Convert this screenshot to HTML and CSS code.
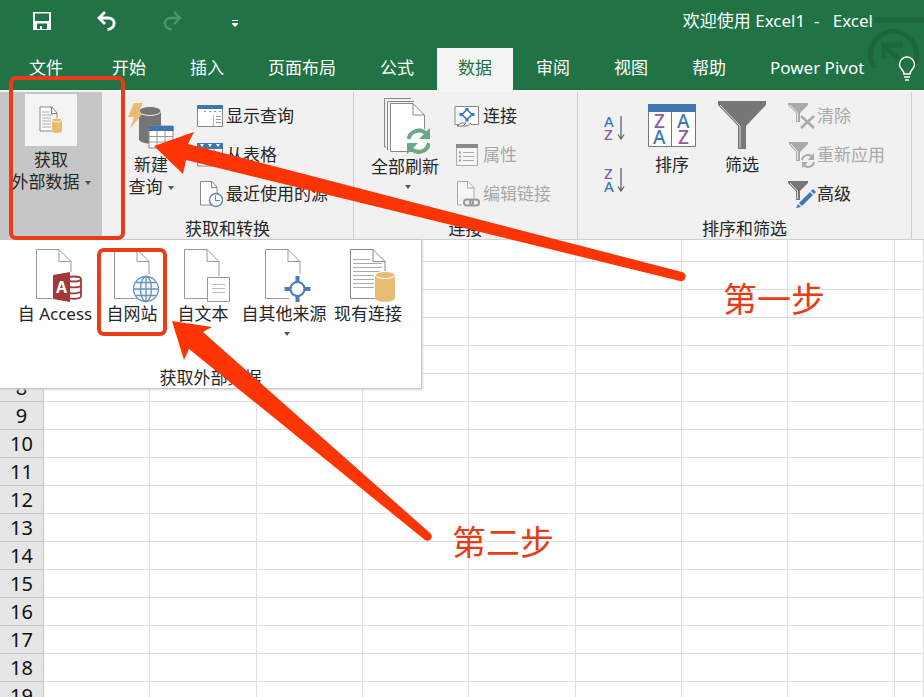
FILE: index.html
```html
<!DOCTYPE html>
<html lang="zh-CN">
<head>
<meta charset="utf-8">
<meta name="viewport" content="width=device-width, initial-scale=1">
<title>欢迎使用 Excel1 - Excel</title>
<link rel="stylesheet" href="styles.css">
</head>
<body>
<header class="header">
  <svg class="header-art" width="60" height="90" viewBox="0 0 60 90" fill="none" stroke="#1c663d" aria-hidden="true">
    <path d="M10 20H60" stroke-width="5"/>
    <path d="M11 68A23 23 0 1 1 48 68" stroke-width="5"/>
    <path d="M20 59V45H39M22 47L39 64" stroke-width="5"/>
  </svg>
  <div class="titlebar">
    <div class="quick">
      <button class="quick-btn" aria-label="保存"><svg width="20" height="20" viewBox="0 0 20 20"><path fill="#fff" fill-rule="evenodd" d="M1 1H19V19H1ZM3 2.500V10H17V2.500ZM5 12.500V18H8V15H10V18H15V12.500Z"/></svg></button>
      <button class="quick-btn" aria-label="撤消"><svg width="20" height="20" viewBox="0 0 20 20" fill="none" stroke="#fff" stroke-width="2.800"><path d="M8 1L2 7L8 13M2.500 7H11C19 7 19.500 17 10.500 18.500"/></svg></button>
      <button class="quick-btn" aria-label="恢复"><svg width="20" height="20" viewBox="0 0 20 20" fill="none" stroke="#4f9470" stroke-width="2.400"><path d="M12 1L18 7L12 13M17.500 7H9C1 7 .5 17 9.500 18.500"/></svg></button>
      <button class="quick-btn" aria-label="自定义快速访问工具栏"><svg width="16" height="20" viewBox="0 0 16 20" fill="#fff"><path d="M5 9H11V10H5ZM5 12H11V13L8 16L5 13Z"/></svg></button>
    </div>
    <h1 class="title">欢迎使用 Excel1 &nbsp;-&nbsp;&nbsp; Excel</h1>
  </div>
  <nav class="tabs">
    <button class="tab tab-file">文件</button>
    <button class="tab">开始</button>
    <button class="tab">插入</button>
    <button class="tab">页面布局</button>
    <button class="tab">公式</button>
    <button class="tab tab-active">数据</button>
    <button class="tab">审阅</button>
    <button class="tab">视图</button>
    <button class="tab">帮助</button>
    <button class="tab">Power Pivot</button>
    <button class="tell-me" aria-label="操作说明搜索"><svg width="18" height="26" viewBox="0 0 18 26" fill="none" stroke="#fff" stroke-width="1.600"><path d="M6 18C6 14 1.500 13 1.500 8.500A7.500 7.500 0 0 1 16.500 8.500C16.500 13 12 14 12 18ZM6 21H12M7 24H11"/></svg></button>
  </nav>
</header>

<section class="ribbon">
  <button class="external">
    <span class="external-icon"><svg width="24" height="28" viewBox="0 0 24 28"><path d="M1 1H13L18 7V25H1Z" fill="#fff" stroke="#888"/><path d="M12.500 1V7.500H18" fill="none" stroke="#777"/><path d="M3 6H10M3 9H14M3 12H12M3 15H12M3 18H12M3 21H12" stroke="#aaa"/><path d="M13 14V25C13 27.500 23 27.500 23 25V14Z" fill="#e8bd73"/><ellipse cx="18" cy="14" rx="5" ry="2" fill="#e8bd73" stroke="#fff" stroke-width=".8"/></svg></span>
    <span>获取</span>
    <span>外部数据<i class="caret"></i></span>
  </button>

  <div class="group group-query">
    <div class="group-body">
      <button class="big">
        <svg width="46" height="56" viewBox="0 0 46 56"><path d="M11 13V41C11 47 33 47 33 41V13Z" fill="#757575"/><ellipse cx="22" cy="13" rx="11" ry="4.500" fill="#757575" stroke="#eee"/><path d="M6 5H15L10 15H15L2 31L6 19H0Z" fill="#e8bd73"/><path d="M21 28H45V50H21Z" fill="#fff" stroke="#888"/><path d="M20.500 28H45.500V33H20.500Z" fill="#3f78b0"/><path d="M29 33V50M37 33V50M21 38.500H45M21 44H45" stroke="#999"/></svg>
        <span>新建</span>
        <span>查询<i class="caret"></i></span>
      </button>
      <div class="list">
        <button class="small"><svg width="26" height="24" viewBox="0 0 26 24"><path d="M.5 2H25.500V22.500H.5Z" fill="#fff" stroke="#888"/><path d="M0 1H26V5H0Z" fill="#3f78b0"/><path d="M7 7.500H24" stroke="#999" stroke-dasharray="2 3"/><path d="M16.500 11V22" stroke="#bbb"/><path d="M19 12.500H24M19 15.500H24M19 18.500H24" stroke="#999"/></svg>显示查询</button>
        <button class="small"><svg width="26" height="24" viewBox="0 0 26 24"><path d="M.5 1H25.500V23H.5Z" fill="#fff" stroke="#888"/><path d="M0 0H26V6H0Z" fill="#3f78b0"/><path d="M3 1H7L5 4ZM11 1H15L13 4ZM19 1H23L21 4Z" fill="#fff"/><path d="M9 6V22M17 6V22M1 11.500H25M1 17H25" stroke="#aaa"/></svg>从表格</button>
        <button class="small"><svg width="26" height="28" viewBox="0 0 26 28"><path d="M3.500 1.500H15L20 7V25H3.500Z" fill="#fff" stroke="#888"/><path d="M14.500 1.500V7.500H20" fill="none" stroke="#888"/><circle cx="19" cy="20" r="6.500" fill="#fff" stroke="#5c88b0" stroke-width="1.400"/><path d="M18.500 15.500V20.500H23" fill="none" stroke="#5c88b0"/></svg>最近使用的源</button>
      </div>
    </div>
    <h2 class="group-name">获取和转换</h2>
  </div>

  <div class="group group-link">
    <div class="group-body">
      <button class="big">
        <svg width="50" height="58" viewBox="0 0 50 58"><path d="M6 49H4.500V.5H31M8 52H7.500V3.500H34" fill="none" stroke="#888"/><path d="M10.500 5.500H33L44.500 17V53.500H10.500Z" fill="#fff" stroke="#888"/><path d="M33 5.500V17H44" fill="none" stroke="#888"/><circle cx="40" cy="43" r="13" fill="#f1f1f1"/><path d="M27 31H44V53H27Z" fill="#fff"/><g fill="none" stroke="#6aa787" stroke-width="4"><path d="M28.500 41A10.500 10.500 0 0 1 46 35.500"/><path d="M49 45A10.500 10.500 0 0 1 31 50.500"/></g><path d="M50 30V41H39ZM27 56V45H38Z" fill="#6aa787"/></svg>
        <span>全部刷新</span>
        <i class="caret"></i>
      </button>
      <div class="list">
        <button class="small"><svg width="26" height="24" viewBox="0 0 26 24"><path d="M1 2.500H24.500V20.500H17M5 20.500H1V2.500" fill="#fff" stroke="#888"/><path d="M3 22L7 19H12L9 22ZM9 22H13L17 19" fill="none" stroke="#777"/><path d="M13 5.500L18 10.500L13 15.500L8 10.500Z" fill="#fff" stroke="#3f78b0" stroke-width="1.600"/><path d="M11.500 4H14.500V7H11.500ZM11.500 14.500H14.500V17.500H11.500ZM5.500 9H9V12H5.500ZM17 9H20.500V12H17Z" fill="#3f78b0"/></svg>连接</button>
        <button class="small" disabled><svg width="26" height="24" viewBox="0 0 26 24"><path d="M2.500 1.500H23.500V22.500H2.500Z" fill="#f7f5f7" stroke="#aaa"/><path d="M2 1H24V5H2Z" fill="#8d878d"/><path d="M9 9.500H20M9 13.500H20M9 17.500H20" stroke="#aaa"/><path d="M5 9.500H7M5 13.500H7M5 17.500H7" stroke="#999" stroke-width="2"/></svg>属性</button>
        <button class="small" disabled><svg width="26" height="28" viewBox="0 0 26 28"><path d="M3.500 1.500H14L20 7.500V25H3.500Z" fill="#f7f5f7" stroke="#aaa"/><path d="M13.500 1.500V8H20" fill="none" stroke="#aaa"/><path d="M8 18H27V27H8Z" fill="#f1f1f1"/><rect x="10" y="19.500" width="9" height="6" rx="3" fill="none" stroke="#999" stroke-width="2"/><rect x="16" y="19.500" width="9" height="6" rx="3" fill="none" stroke="#999" stroke-width="2"/></svg>编辑链接</button>
      </div>
    </div>
    <h2 class="group-name">连接</h2>
  </div>

  <div class="group group-sort">
    <div class="group-body">
      <div class="orders">
        <button class="order" aria-label="升序"><svg width="22" height="30" viewBox="0 0 22 30"><text class="letter letter-a" x="0" y="14">A</text><text class="letter letter-z" x="0" y="27">Z</text><path d="M17 3V26M14 21.500L17 26L20 21.500" fill="none" stroke="#666" stroke-width="1.300"/></svg></button>
        <button class="order" aria-label="降序"><svg width="22" height="30" viewBox="0 0 22 30"><text class="letter letter-z" x="0" y="14">Z</text><text class="letter letter-a" x="0" y="27">A</text><path d="M17 3V26M14 21.500L17 26L20 21.500" fill="none" stroke="#666" stroke-width="1.300"/></svg></button>
      </div>
      <button class="big">
        <svg width="48" height="56" viewBox="0 0 48 56"><path d="M.5 7H47.500V48.500H.5Z" fill="#fff" stroke="#777"/><path d="M0 6H48V14H0Z" fill="#3f78b0"/><path d="M23.500 14V48" stroke="#777"/><text class="letter letter-big letter-z" x="6" y="30">Z</text><text class="letter letter-big letter-a" x="5" y="46">A</text><text class="letter letter-big letter-a" x="29" y="30">A</text><text class="letter letter-big letter-z" x="30" y="46">Z</text></svg>
        <span>排序</span>
      </button>
      <button class="big">
        <svg width="48" height="56" viewBox="0 0 48 56"><path d="M0 3H48V7L28 28V51H20V28L0 7Z" fill="#777"/><path d="M2 7L22 28V50" fill="none" stroke="#ddd"/></svg>
        <span>筛选</span>
      </button>
      <div class="list">
        <button class="small" disabled><svg width="28" height="28" viewBox="0 0 28 28"><path d="M0 1H20V3L12 11V20H8V11L0 3Z" fill="#aaa"/><path d="M2 3L9.500 11V19" fill="none" stroke="#eee"/><path d="M13 14L26 26M26 14L13 26" stroke="#aaa" stroke-width="2.600"/></svg>清除</button>
        <button class="small" disabled><svg width="28" height="28" viewBox="0 0 28 28"><path d="M1 1H20V3L12 11V20H8V11L1 3Z" fill="#aaa"/><path d="M3 3L9.500 11V19" fill="none" stroke="#eee"/><circle cx="20" cy="20" r="7.500" fill="#f1f1f1"/><path d="M14 19A6 6 0 0 1 25 17M26 21A6 6 0 0 1 15 23" fill="none" stroke="#aaa" stroke-width="2"/><path d="M26 12V19H20ZM14 27V21H20Z" fill="#aaa"/></svg>重新应用</button>
        <button class="small"><svg width="28" height="28" viewBox="0 0 28 28"><path d="M0 1H20V3L12 11V20H8V11L0 3Z" fill="#777"/><path d="M2 3L9.500 11V19" fill="none" stroke="#ddd"/><path d="M11 23L22 12L25 15L14 26Z" fill="#3f78b0"/><path d="M10 24L13 27L8 28ZM23 11L25 9L28 12L26 14Z" fill="#3f78b0"/></svg>高级</button>
      </div>
    </div>
    <h2 class="group-name">排序和筛选</h2>
  </div>

  <div class="dropdown">
    <div class="sources">
      <button class="source">
        <svg width="54" height="55" viewBox="0 0 54 55"><path d="M43 24V13.500L31 1.500H8.500V50.500H24M31 1.500V13.500H43" fill="none" stroke="#999"/><path d="M40 30C42 27 53 27 54 30V49C53 52 42 52 40 49Z" fill="#fff"/><g fill="none" stroke="#a4373a" stroke-width="1.800"><ellipse cx="46" cy="31" rx="7" ry="2.500"/><path d="M53 31V48C53 51.500 41 51.500 40 49M53 37C53 40 41 40 40 38M53 42.500C53 46 41 46 40 44"/></g><path d="M25 27L42 24V54L25 51Z" fill="#a4373a"/><text class="access-letter" x="28" y="45">A</text></svg>
        <span>自 Access</span>
      </button>
      <button class="source">
        <svg width="54" height="55" viewBox="0 0 54 55"><path d="M44 26V13.500L32 1.500H9.500V50.500H33M32 1.500V13.500H44" fill="none" stroke="#999"/><g transform="translate(2 0)" fill="none" stroke="#6a93b8" stroke-width="1.300"><circle cx="39" cy="41" r="12.500" fill="#f0f7fc"/><ellipse cx="39" cy="41" rx="5.500" ry="12.500"/><path d="M39 28.500V53.500M26.500 41H51.500M29 34.500H49M29 47.500H49"/></g></svg>
        <span>自网站</span>
      </button>
      <button class="source">
        <svg width="54" height="55" viewBox="0 0 54 55"><path d="M43 28V13.500L31 1.500H8.500V50.500H31M31 1.500V13.500H43" fill="none" stroke="#999"/><path d="M31.500 29.500H53.500V53.500H31.500Z" fill="#fff" stroke="#999"/><path d="M36 36.500H49M36 40.500H49M36 44.500H49" stroke="#bbb"/></svg>
        <span>自文本</span>
      </button>
      <button class="source">
        <svg width="54" height="55" viewBox="0 0 54 55"><path d="M43 26V13.500L31 1.500H8.500V50.500H32M31 1.500V13.500H43" fill="none" stroke="#999"/><path d="M40.500 28V54M27.500 41H53.500" stroke="#4a7db8" stroke-width="4"/><circle cx="40.500" cy="41" r="7" fill="#fff" stroke="#4a7db8" stroke-width="2"/></svg>
        <span>自其他来源</span>
        <i class="caret"></i>
      </button>
      <button class="source">
        <svg width="54" height="55" viewBox="0 0 54 55"><path d="M44 24V13.500L32 1.500H9.500V50.500H34M32 1.500V13.500H44" fill="none" stroke="#888"/><path d="M12 11.500H29M12 15.500H41M12 19.500H41M12 23.500H39M12 27.500H33M12 31.500H33M12 35.500H33M12 39.500H33" stroke="#aaa"/><path d="M34 27V50C34 55 54 55 54 50V27Z" fill="#e8bd73"/><ellipse cx="44" cy="27" rx="10" ry="3.500" fill="#e8bd73" stroke="#fff"/></svg>
        <span>现有连接</span>
      </button>
    </div>
    <h2 class="group-name">获取外部数据</h2>
  </div>
</section>

<main class="sheet">
  <table class="grid">
    <colgroup><col class="col-head"><col class="col-a"><col class="col-b"><col class="col-a"><col class="col-a"><col class="col-b"><col class="col-a"><col class="col-a"><col class="col-b"><col></colgroup>
    <tbody>
      <tr class="row-cut"><th></th><td></td><td></td><td></td><td></td><td></td><td></td><td></td><td></td><td></td></tr>
      <tr><th></th><td></td><td></td><td></td><td></td><td></td><td></td><td></td><td></td><td></td></tr>
      <tr><th></th><td></td><td></td><td></td><td></td><td></td><td></td><td></td><td></td><td></td></tr>
      <tr><th></th><td></td><td></td><td></td><td></td><td></td><td></td><td></td><td></td><td></td></tr>
      <tr><th></th><td></td><td></td><td></td><td></td><td></td><td></td><td></td><td></td><td></td></tr>
      <tr><th scope="row">8</th><td></td><td></td><td></td><td></td><td></td><td></td><td></td><td></td><td></td></tr>
      <tr><th scope="row">9</th><td></td><td></td><td></td><td></td><td></td><td></td><td></td><td></td><td></td></tr>
      <tr><th scope="row">10</th><td></td><td></td><td></td><td></td><td></td><td></td><td></td><td></td><td></td></tr>
      <tr><th scope="row">11</th><td></td><td></td><td></td><td></td><td></td><td></td><td></td><td></td><td></td></tr>
      <tr><th scope="row">12</th><td></td><td></td><td></td><td></td><td></td><td></td><td></td><td></td><td></td></tr>
      <tr><th scope="row">13</th><td></td><td></td><td></td><td></td><td></td><td></td><td></td><td></td><td></td></tr>
      <tr><th scope="row">14</th><td></td><td></td><td></td><td></td><td></td><td></td><td></td><td></td><td></td></tr>
      <tr><th scope="row">15</th><td></td><td></td><td></td><td></td><td></td><td></td><td></td><td></td><td></td></tr>
      <tr><th scope="row">16</th><td></td><td></td><td></td><td></td><td></td><td></td><td></td><td></td><td></td></tr>
      <tr><th scope="row">17</th><td></td><td></td><td></td><td></td><td></td><td></td><td></td><td></td><td></td></tr>
      <tr><th scope="row">18</th><td></td><td></td><td></td><td></td><td></td><td></td><td></td><td></td><td></td></tr>
      <tr><th scope="row">19</th><td></td><td></td><td></td><td></td><td></td><td></td><td></td><td></td><td></td></tr>
    </tbody>
  </table>
</main>

<svg class="marks" aria-hidden="true">
  <g fill="none" stroke="#ea3b14" stroke-width="4">
    <rect x="11" y="78" width="112" height="160" rx="5"/>
    <rect x="99" y="250" width="66" height="84" rx="5"/>
  </g>
  <g fill="#fd3505">
    <path d="M154 146L194 132L188 144L682 272A4 4 0 0 1 680 281L186 160L183 174Z"/>
    <path d="M172 321L212 327L203 332L430 533A4 4 0 0 1 425 540L189 349L184 360Z"/>
  </g>
</svg>
<p class="step step-one">第一步</p>
<p class="step step-two">第二步</p>
</body>
</html>
```
FILE: styles.css
```css
* { box-sizing: border-box; }

body {
  margin: 0;
  height: 100vh;
  position: relative;
  display: flex;
  flex-direction: column;
  overflow: hidden;
  background: #fff;
  color: #262626;
  font-family: "Noto Sans", "Noto Sans CJK SC", sans-serif;
  font-size: 17px;
  line-height: 22px;
}

button {
  margin: 0;
  padding: 0;
  border: 0;
  background: none;
  color: inherit;
  font: inherit;
  white-space: nowrap;
}

h1, h2, p { margin: 0; font-size: inherit; font-weight: 400; }
svg { display: block; flex: none; }

/* Title bar and tabs */
.header { position: relative; flex: none; background: #217346; color: #fff; }
.header-art { position: absolute; top: 0; right: 0; }
.titlebar {
  position: relative;
  display: flex;
  align-items: center;
  justify-content: space-between;
  height: 42px;
  margin-bottom: 6px;
  padding: 0 51px 0 32px;
}
.quick { display: flex; gap: 45px; }
.title { white-space: nowrap; }
.tabs { position: relative; display: flex; gap: 2px; height: 42px; padding-left: 8px; }
.tab { padding: 0 21px 2px; }
.tab-file { margin-right: 5px; }
.tab-active { background: #f4f4f4; color: #217346; }
.tell-me { margin-left: 11px; }

/* Ribbon */
.ribbon {
  position: relative;
  z-index: 1;
  flex: none;
  display: flex;
  height: 150px;
  background: #f1f1f1;
  border-top: 2px solid #f6f6f6;
  border-bottom: 1px solid #d0d0d0;
}
.external {
  width: 102px;
  padding-top: 2px;
  display: flex;
  flex-direction: column;
  align-items: center;
  background: #c6c6c6;
}
.external-icon {
  display: grid;
  place-items: center;
  width: 52px;
  height: 52px;
  margin-bottom: 3px;
  background: #f4f4f4;
}
.caret {
  display: inline-block;
  margin-left: 5px;
  border: 3px solid transparent;
  border-top: 4px solid #555;
  border-bottom: 0;
  vertical-align: middle;
}
.group {
  display: flex;
  flex-direction: column;
  justify-content: space-between;
  border-right: 1px solid #cfcfcf;
}
.group-body { display: flex; }
.group-name { line-height: 20px; text-align: center; }
.group-query { width: 252px; }
.group-query .group-body { padding-left: 19px; gap: 16px; }
.group-link { width: 224px; }
.group-link .group-body { padding-left: 17px; gap: 15px; }
.group-sort { width: 334px; }
.group-sort .group-body { padding-left: 26px; gap: 22px; }
.big {
  min-width: 48px;
  padding-top: 6px;
  display: flex;
  flex-direction: column;
  align-items: center;
}
.group-query .big { width: 60px; }
.big > .caret, .source > .caret { margin: 7px 0 0 5px; }
.list { padding-top: 4px; }
.small { display: flex; align-items: center; gap: 3px; height: 39px; }
.group-sort .small { gap: 1px; }
.small:disabled { color: #a8a8a8; }
.orders { display: flex; flex-direction: column; gap: 22px; padding-top: 21px; }

.letter { font-family: "Noto Sans", sans-serif; font-size: 15px; font-weight: 500; }
.letter-big { font-size: 19px; }
.letter-a { fill: #3f78b0; }
.letter-z { fill: #8d56a8; }

/* Source menu under the first ribbon button */
.dropdown {
  position: absolute;
  top: 147px;
  left: 0;
  width: 422px;
  height: 150px;
  display: flex;
  flex-direction: column;
  justify-content: space-between;
  background: #fff;
  border: 1px solid #c6c6c6;
  border-left: 0;
  box-shadow: 1px 1px 2px #d8d8d8;
}
.sources {
  display: grid;
  grid-template-columns: 80px 74px 68px 94px 74px;
  padding: 8px 0 0 15px;
}
.source { display: flex; flex-direction: column; align-items: center; }
.access-letter { fill: #fff; font-family: "Noto Sans", sans-serif; font-size: 16px; font-weight: 700; }

/* Worksheet */
.sheet { flex: 1; min-height: 0; overflow: hidden; }
.grid { width: 100%; table-layout: fixed; border-spacing: 0; }
.col-head { width: 44px; }
.col-a { width: 106px; }
.col-b { width: 107px; }
.grid th, .grid td { height: 28px; padding: 0; border: solid #dedede; border-width: 0 1px 1px 0; }
.grid th { background: #e6e6e6; border-color: #c4c4c4; color: #111; font-size: 20px; font-weight: 400; line-height: 27px; }
.grid .row-cut th, .grid .row-cut td { height: 22px; }

/* Hand-drawn guidance laid over the window */
.marks { position: absolute; inset: 0; z-index: 2; width: 100%; height: 100%; pointer-events: none; }
.step { position: absolute; z-index: 2; color: #e43d18; font-size: 34px; line-height: 40px; }
.step-one { left: 723px; top: 279px; }
.step-two { left: 452px; top: 522px; }
```
